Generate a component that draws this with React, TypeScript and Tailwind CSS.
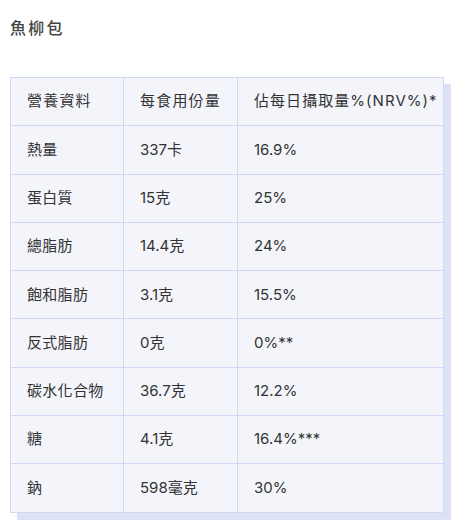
const rows: [string, string, string][] = [
  ['熱量', '337卡', '16.9%'],
  ['蛋白質', '15克', '25%'],
  ['總脂肪', '14.4克', '24%'],
  ['飽和脂肪', '3.1克', '15.5%'],
  ['反式脂肪', '0克', '0%**'],
  ['碳水化合物', '36.7克', '12.2%'],
  ['糖', '4.1克', '16.4%***'],
  ['鈉', '598毫克', '30%'],
];

const font = { fontFamily: 'Inter, "Noto Sans CJK TC", sans-serif' };

export default function App() {
  return (
    <div className="bg-white w-[469px] h-[530px] px-[10px] pt-[17px]" style={font}>
      <h2 className="text-[16px] leading-[22px] text-[#444] tracking-[0.14em] font-medium">魚柳包</h2>
      <table className="mt-[38px] w-[434px] border-collapse table-fixed bg-[#f4f5fb] text-[15px] text-[#333] shadow-[7px_7px_0_#dde3f7]">
        <colgroup>
          <col className="w-[113px]" />
          <col className="w-[114px]" />
          <col />
        </colgroup>
        <thead>
          <tr className="h-[48.3px]">
            <th className="border border-[#cfd8f7] text-left font-normal pl-4 tracking-[0.08em]">營養資料</th>
            <th className="border border-[#cfd8f7] text-left font-normal pl-4 tracking-[0.08em]">每食用份量</th>
            <th className="border border-[#cfd8f7] text-left font-normal pl-4 tracking-[0.07em] whitespace-nowrap">佔每日攝取量%(NRV%)*</th>
          </tr>
        </thead>
        <tbody>
          {rows.map(([name, amount, nrv]) => (
            <tr key={name} className="h-[48.3px]">
              <td className="border border-[#cfd8f7] pl-4 tracking-[0.02em]">{name}</td>
              <td className="border border-[#cfd8f7] pl-4">{amount}</td>
              <td className="border border-[#cfd8f7] pl-4">{nrv}</td>
            </tr>
          ))}
        </tbody>
      </table>
    </div>
  );
}
